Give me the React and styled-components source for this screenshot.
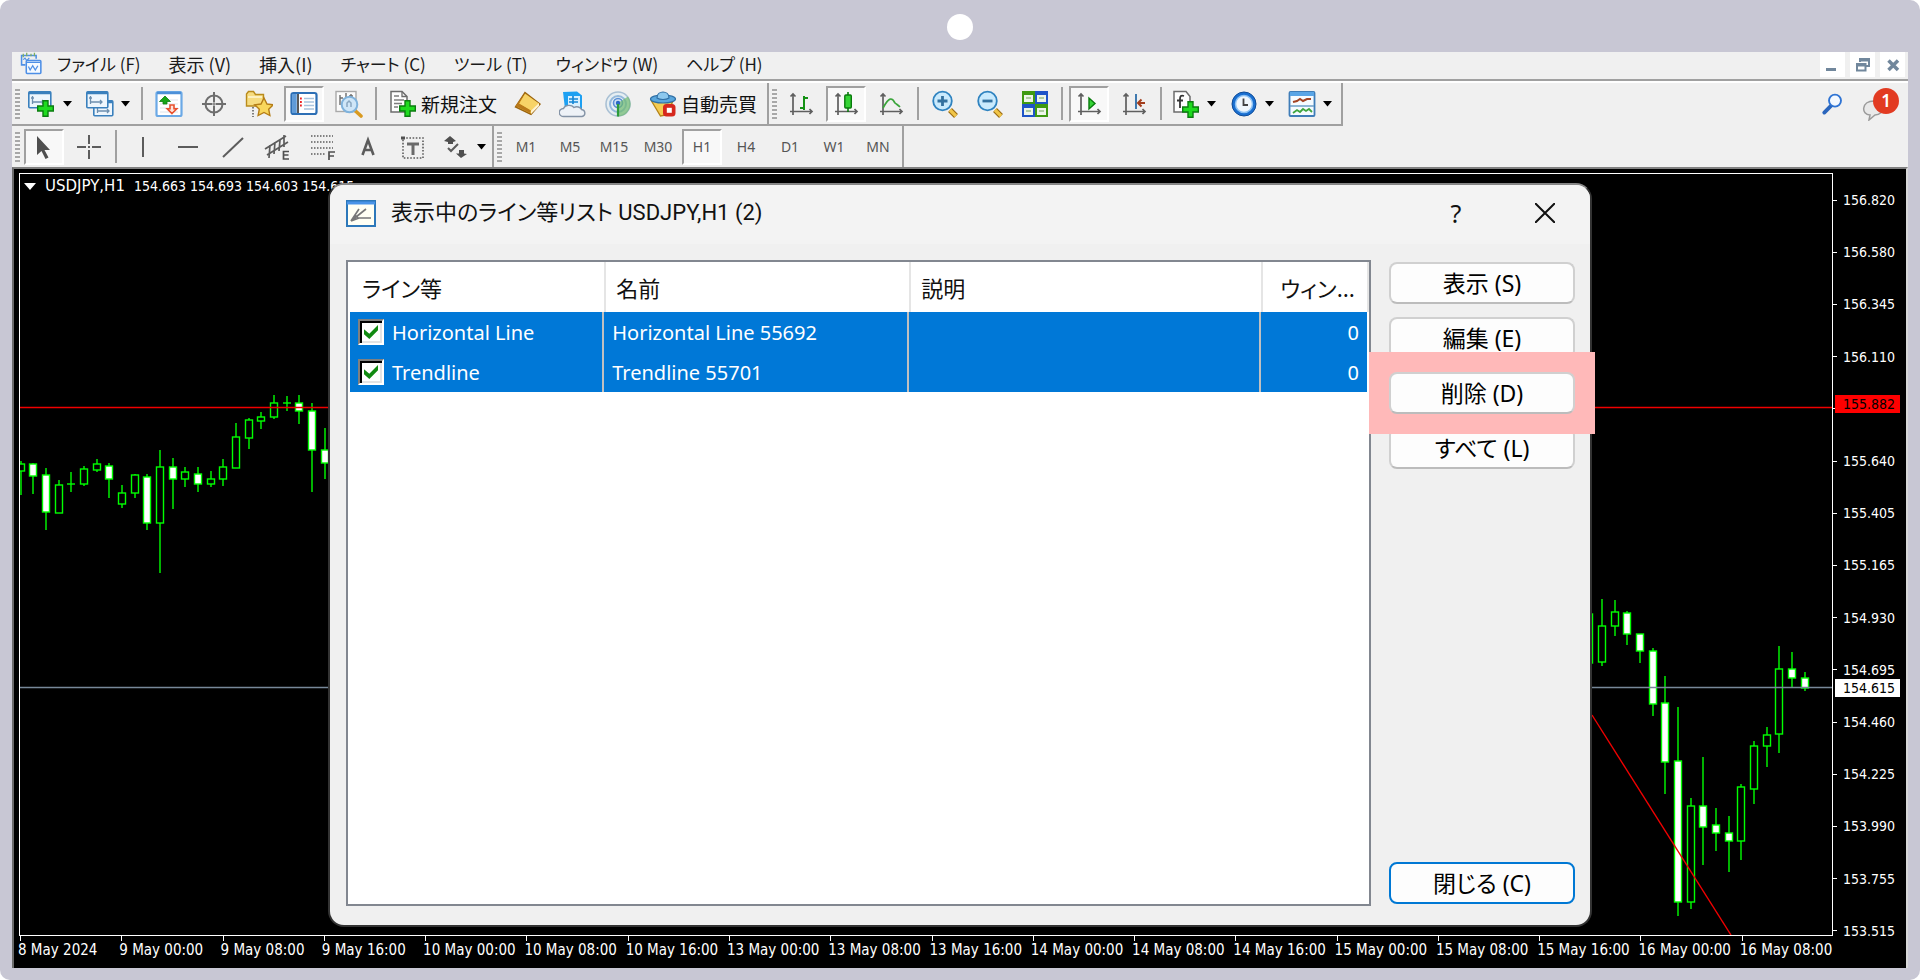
import React from "react";
import styled, { createGlobalStyle, css } from "styled-components";

const GlobalStyle = createGlobalStyle`
  * { box-sizing: border-box; }
  body { margin: 0; background: #fff; }
  button { font: inherit; color: inherit; border: 0; padding: 0; background: none; }
`;

const UI_FONT = `"Noto Sans", "Noto Sans CJK JP", sans-serif`;
const AXIS_FONT = `"DejaVu Sans Condensed", "Noto Sans", sans-serif`;

/* ---------- window frame ---------- */

const Frame = styled.div`
  min-height: 100vh;
  display: flex;
  flex-direction: column;
  padding: 0 12px 12px;
  border-radius: 10px;
  background: #c8c7d4;
  font-family: ${UI_FONT};
`;
const FrameTop = styled.div`
  height: 52px;
  display: flex;
  justify-content: center;
  padding-top: 14px;
`;
const Camera = styled.span`
  width: 26px;
  height: 26px;
  border-radius: 50%;
  background: #fff;
`;
const Terminal = styled.div`
  flex: 1;
  display: flex;
  flex-direction: column;
  background: #f0f0f0;
`;

/* ---------- menu ---------- */

const MenuBar = styled.header`
  height: 31px;
  display: flex;
  align-items: flex-start;
  padding: 0 3px 0 7px;
  border-bottom: 2px solid #fff;
  box-shadow: inset 0 -2px #a0a0a0;
`;
const MenuList = styled.nav`
  flex: 1;
  display: flex;
`;
const MenuItem = styled.button`
  height: 24px;
  padding: 0 14px;
  font-family: "Noto Sans CJK JP", sans-serif;
  font-feature-settings: "palt";
  font-size: ${(p) => (p.$kanji ? 18 : 17)}px;
  line-height: 24px;
  color: #1a1a1a;
  white-space: nowrap;
`;
const WindowButtons = styled.div`
  display: flex;
  gap: 5px;
`;
const WindowButton = styled.button`
  width: 25px;
  height: 25px;
  background: #fff;
  display: flex;
`;

/* ---------- toolbars ---------- */

const Toolbar = styled.div`
  height: ${(p) => (p.$last ? 41 : 43)}px;
  display: flex;
  justify-content: space-between;
`;
const Segments = styled.div`
  display: flex;
`;
const Segment = styled.div`
  display: flex;
  align-items: center;
  padding: 0 ${(p) => p.$end || 4}px 0 3px;
  border-right: 2px solid #a0a0a0;
  border-bottom: ${(p) => (p.$flat ? "0" : "2px solid #a0a0a0")};
`;
const Grip = styled.span`
  width: 5px;
  height: 30px;
  margin-right: 4px;
  background: repeating-linear-gradient(#a8a8a8 0 2px, #f4f4f4 2px 4px);
`;
const Group = styled.div`
  display: flex;
  gap: ${(p) => p.$gap || 5}px;
`;
const Divider = styled.span`
  width: 2px;
  height: 33px;
  margin: 0 6px;
  background: #a0a0a0;
`;
const ToolButton = styled.button`
  min-width: ${(p) => (p.$split ? 36 : 40)}px;
  height: 36px;
  display: flex;
  align-items: center;
  justify-content: center;
  gap: 4px;
  font-size: 14px;
  color: #555;
  border: 2px solid transparent;
  ${(p) =>
    p.$pressed &&
    css`
      background: #f8f8f8;
      border-color: #a0a0a0 #fff #fff #a0a0a0;
    `}
`;
const LabelButton = styled(ToolButton)`
  padding: 0 4px;
  font-family: "Noto Sans CJK JP", sans-serif;
  font-size: 19px;
  line-height: 24px;
  color: #111;
`;
const CaretButton = styled.button`
  width: 14px;
  height: 36px;
  display: flex;
  align-items: center;
  justify-content: center;
`;
const Split = styled.div`
  display: flex;
  margin-right: 3px;
`;
const Status = styled.div`
  display: flex;
  align-items: center;
  gap: 18px;
  padding: 0 8px 2px 0;
`;

/* ---------- chart ---------- */

const ChartWindow = styled.main`
  position: relative;
  flex: 1;
  display: grid;
  grid-template: 1fr 32px / 1fr 70px;
  padding: 4px 3px 0 5px;
  background: #000;
  border: solid;
  border-width: 2px 2px 0 2px;
  border-color: #808080 #d8d8d8 #000 #6c6c6c;
  color: #fff;
  font-family: ${AXIS_FONT};
  font-size: 14px;
`;
const Plot = styled.section`
  position: relative;
  border: 1px solid #fff;
  min-height: 600px;
`;
const PlotDrawing = styled.svg`
  position: absolute;
  inset: 0;
  width: 100%;
  height: 100%;
`;
const SymbolLine = styled.div`
  position: absolute;
  top: 4px;
  left: 4px;
  display: flex;
  align-items: center;
  gap: 9px;
  line-height: 17px;
  white-space: pre;
`;
const SymbolName = styled.span`
  font-family: "DejaVu Sans", sans-serif;
  font-size: 15px;
`;
const PriceAxis = styled.aside`
  position: relative;
  display: flex;
  flex-direction: column;
  justify-content: space-between;
  padding: 18px 0 0;
  margin-bottom: -4px;
`;
const PriceMark = styled.span`
  display: flex;
  align-items: center;
  gap: 6px;
  height: 18px;
  line-height: 18px;
  &::before {
    content: "";
    width: 4px;
    height: 1px;
    background: #fff;
  }
`;
const PriceTag = styled.span`
  position: absolute;
  left: 2px;
  top: ${(p) => p.$top}%;
  width: 65px;
  height: 18px;
  padding-left: 8px;
  line-height: 18px;
  color: #000;
  background: ${(p) => p.$color};
`;
const DateAxis = styled.footer`
  grid-column: 1 / 3;
  display: grid;
  grid-template-columns: repeat(18, 1fr);
  padding: 0 60px 0 1px;
  font-size: 15px;
`;
const DateMark = styled.span`
  position: relative;
  padding-top: 5px;
  line-height: 18px;
  white-space: nowrap;
  text-indent: -2px;
  &::before {
    content: "";
    position: absolute;
    left: 0;
    top: 0;
    width: 1px;
    height: 5px;
    background: #fff;
  }
`;

/* ---------- dialog ---------- */

const Dialog = styled.div`
  position: absolute;
  top: 14px;
  bottom: 41px;
  left: 314px;
  right: 314px;
  display: flex;
  flex-direction: column;
  background: #f0f0f0;
  border: 2px solid #333;
  border-top-color: #868686;
  border-radius: 16px;
  color: #111;
  font-family: ${UI_FONT};
  font-feature-settings: "palt";
`;
const DialogTitleBar = styled.div`
  height: 59px;
  display: flex;
  align-items: center;
  gap: 15px;
  padding: 0 35px 3px 16px;
  border-radius: 14px 14px 0 0;
  background: #f3f3f3;
`;
const DialogTitle = styled.h1`
  flex: 1;
  margin: 0;
  font-family: Roboto, "Noto Sans CJK JP", sans-serif;
  font-size: 22px;
  font-weight: 400;
  line-height: 32px;
`;
const TitleButton = styled.button`
  width: 20px;
  height: 32px;
  display: flex;
  align-items: center;
  justify-content: center;
  font-size: 25px;
  line-height: 32px;
  & + & { margin-left: 54px; }
`;
const DialogBody = styled.div`
  flex: 1;
  display: flex;
  gap: 18px;
  padding: 16px 15px 19px 16px;
`;
const ListBox = styled.div`
  flex: 1;
  padding: 0 2px;
  background: #fff;
  border: 2px solid #828790;
`;
const ObjectTable = styled.table`
  width: 100%;
  table-layout: fixed;
  border-collapse: separate;
  border-spacing: 0;
  font-size: 20px;
`;
const Column = styled.col`
  width: ${(p) => p.$width};
`;
const HeadCell = styled.th`
  height: 50px;
  padding: 0 12px;
  font-family: "Noto Sans CJK JP", sans-serif;
  font-size: 22px;
  font-weight: 400;
  text-align: ${(p) => (p.$right ? "right" : "left")};
  white-space: nowrap;
  box-shadow: 2px 0 #e5e5e5;
`;
const Cell = styled.td`
  height: 40px;
  padding: 0 8px;
  background: #0078d7;
  color: #fff;
  border-right: 2px solid #c0c0c0;
  text-align: ${(p) => (p.$right ? "right" : "left")};
  white-space: nowrap;
  &:last-child { border-right: 0; }
`;
const CheckLabel = styled.label`
  display: flex;
  align-items: center;
  gap: 8px;
`;
const CheckBox = styled.input`
  appearance: none;
  position: relative;
  width: 26px;
  height: 26px;
  margin: 0;
  background: #fff;
  border: 2px solid;
  border-color: #808080 #fff #fff #808080;
  box-shadow: inset 2px 2px #000, inset -2px -2px #e3e3e3;
  &:checked::before {
    content: "";
    position: absolute;
    inset: 4px;
    background: #108a10;
    clip-path: polygon(0 30%, 38% 62%, 100% 0, 100% 38%, 38% 100%, 0 66%);
  }
`;
const Actions = styled.div`
  width: 186px;
  display: flex;
  flex-direction: column;
  gap: 13px;
  padding: 2px 0;
`;
const ActionButton = styled.button`
  height: 42px;
  flex: none;
  font-family: ${UI_FONT};
  font-size: 23px;
  line-height: 36px;
  color: #000;
  background: #fdfdfd;
  border: 2px solid ${(p) => (p.$primary ? "#0078d4" : "#d0d0d0")};
  border-bottom-color: ${(p) => (p.$primary ? "#0078d4" : "#bcbcbc")};
  border-radius: 8px;
  ${(p) => p.$primary && "margin-top: auto;"}
`;
const Highlight = styled.div`
  position: relative;
  z-index: 1;
  display: flex;
  flex-direction: column;
  &::before {
    content: "";
    position: absolute;
    inset: -20px;
    background: #ffb9b9;
  }
  > * { position: relative; }
`;

/* ---------- icons ---------- */

const Svg = ({ children, size = 28, ...rest }) => (
  <svg width={size} height={size} viewBox="0 0 28 28" fill="none" aria-hidden="true" {...rest}>
    {children}
  </svg>
);
const Caret = () => (
  <svg width="9" height="6" viewBox="0 0 9 6" aria-hidden="true"><path d="M0 0h9L4.500 5.500z" fill="#000" /></svg>
);
const Plus = ({ x = 10, y = 10 }) => (
  <path transform={`translate(${x} ${y})`} d="M6 0.700h5v5.300h5.300v5H11v5.300H6V11H.7V6H6z" fill="#1fdb1f" stroke="#0b7d10" strokeWidth="1.400" />
);
const Axes = () => (
  <path d="M6 4v21M3 21.500h22M3.500 6.500L6 4l2.500 2.500M22.500 19l2.500 2.500-2.500 2.500" stroke="#5f5f5f" strokeWidth="1.700" />
);
const ChartPane = ({ x, y, w, h }) => (
  <g transform={`translate(${x} ${y})`}>
    <rect x=".8" y=".8" width={w} height={h} rx="1" fill="#eef6fd" stroke="#3a80bd" strokeWidth="1.600" />
    <path d={`M1 2h${w}`} stroke="#3a80bd" strokeWidth="2.500" />
    <path d="M4.500 5v8M3 7h3M4 11h12M14 9l2 2-2 2" stroke="#6d8fae" strokeWidth="1.300" />
  </g>
);

const icons = {
  app: (
    <>
      <path d="M7.500 15H3V4h17v4" stroke="#4d8fe6" strokeWidth="1.800" />
      <path d="M5 2v4M9 1v4M14 2v3M18 1v4" stroke="#7fae63" strokeWidth="1.500" />
      <path d="M5 9l2-2 2 3 3-3" stroke="#4d8fe6" strokeWidth="1.300" />
      <rect x="8.500" y="10" width="17" height="15" rx="1" fill="#f5faff" stroke="#4d8fe6" strokeWidth="1.800" />
      <path d="M9 12h16M11 17l2 4 3-5 3 5 3-5" stroke="#4d8fe6" strokeWidth="1.500" />
    </>
  ),
  newChart: (<><ChartPane x={0} y={1} w={22} h={16} /><Plus x={9} y={10} /></>),
  profiles: (<><ChartPane x={7} y={10} w={19} h={15} /><ChartPane x={0} y={1} w={21} h={16} /></>),
  market: (
    <>
      <rect x="1.500" y="2" width="25" height="24" rx="1.500" fill="#fff" stroke="#6ba9e6" strokeWidth="2.200" />
      <path d="M2 3h24" stroke="#4d90d8" strokeWidth="2.500" />
      <path d="M5 10h18M5 14h18M5 18h18M5 22h18" stroke="#dde3ea" />
      <path d="M10 6l5.500 5.500H12V14H8v-2.500H4.500z" fill="#16a616" stroke="#0d7d10" strokeWidth=".8" />
      <path d="M17 23.500l4.800-4.800h-2.800V15h-4v3.700h-2.800z" fill="#ffe3da" stroke="#e8512e" strokeWidth="1.600" />
    </>
  ),
  cross: (
    <>
      <circle cx="14" cy="14" r="8.500" stroke="#6e6e6e" strokeWidth="2" />
      <path d="M14 2v10M14 16v10M2 14h10M16 14h10" stroke="#6e6e6e" strokeWidth="2" />
      <path d="M14 12v4M12 14h4" stroke="#6e6e6e" />
    </>
  ),
  folder: (
    <>
      <path d="M1.500 16V4l2-2.500h5l2 3h8V16z" fill="#f6dc80" stroke="#b98b1c" strokeWidth="1.400" />
      <path d="M3 7h14" stroke="#fff6cf" strokeWidth="1.600" />
      <path d="M8 17v10" stroke="#555" strokeWidth="1.500" strokeDasharray="1.500 1.500" />
      <path d="M19 8l3 6 6.300.8-4.600 4.400 1.200 6.300L19 22.500l-5.900 3 1.200-6.300-4.600-4.400L16 14z" fill="#f9d75c" stroke="#b57d16" strokeWidth="1.400" />
    </>
  ),
  panel: (
    <>
      <rect x="1.500" y="3" width="25" height="21" rx="2" fill="#fff" stroke="#2d6fb5" strokeWidth="2.200" />
      <path d="M4.500 4v19" stroke="#5f9bd8" strokeWidth="4.500" />
      <path d="M8 4v19" stroke="#222" strokeWidth="1.500" />
      <path d="M14 8.500h10M14 12h10M14 15.500h10M14 19h10" stroke="#a9c4dd" strokeWidth="1.500" />
      <path d="M10 8.500h1.800M10 12h1.800M10 15.500h1.800" stroke="#e22" strokeWidth="1.800" />
    </>
  ),
  tester: (
    <>
      <rect x="1" y="1.500" width="20" height="20" fill="#fbfbfb" stroke="#a9a9a9" strokeWidth="1.400" />
      <path d="M5 5v10M5 8h3M11 3v7M16 4v8M14 6h4" stroke="#6c6c6c" strokeWidth="1.400" />
      <path d="M20.500 21l5.500 5" stroke="#d99a20" strokeWidth="3.600" strokeLinecap="round" />
      <circle cx="14.500" cy="14.500" r="7.800" fill="#cfe6f8" stroke="#7fb2dc" strokeWidth="2" />
      <path d="M12 17v-4l2-2 2 2v4" stroke="#8aa7c0" strokeWidth="1.500" />
    </>
  ),
  order: (
    <>
      <path d="M2 1.500h11l5 5V22H2z" fill="#fdfdfd" stroke="#6c6c6c" strokeWidth="1.500" />
      <path d="M13 1.500v5h5" stroke="#6c6c6c" strokeWidth="1.300" />
      <path d="M5 6h5M5 10h10M5 13.500h8M5 17h4" stroke="#7d7d7d" strokeWidth="1.500" />
      <Plus x={10} y={10} />
    </>
  ),
  book: (
    <>
      <path d="M11 2.500L26 14l-9 10.500L1.500 17z" fill="#f0bd3c" stroke="#9b6510" strokeWidth="1.400" />
      <path d="M11 3l-9.500 13L16 23l1-3-12-6.500z" fill="#b9791a" />
      <path d="M11 4l14 9.500-8 7L5.500 13.500z" fill="#f7d367" />
      <path d="M17 20.500l8-7.500v3l-8 8z" fill="#fff3d0" />
    </>
  ),
  cloud: (
    <>
      <path d="M4 2l14-.5 5 4V19H6z" fill="#1da0f2" />
      <path d="M9 6h12v11H9z" fill="#d8f0ff" />
      <path d="M10 9h9M14 6v8M10 12h9" stroke="#1687d6" strokeWidth="1.700" />
      <path d="M5 26.500a4.500 4 0 0 1-.5-8 6 5 0 0 1 10.500-1 5 4 0 0 1 7.500 2 4 3.600 0 0 1 .5 7z" fill="#eef2f7" stroke="#8493a6" strokeWidth="1.400" />
    </>
  ),
  signal: (
    <>
      <circle cx="14" cy="14" r="12" fill="#e6eef2" stroke="#a9c0d4" strokeWidth="1.600" />
      <circle cx="14" cy="14" r="8" stroke="#94b9dc" strokeWidth="2" />
      <circle cx="14" cy="13" r="4.500" fill="#cfe0f4" stroke="#5a8fd6" strokeWidth="1.600" />
      <path d="M14 13v13.500A12.500 12.500 0 0 0 24 6.500z" fill="#6fba6f" opacity=".7" />
      <circle cx="14" cy="13" r="2.200" fill="#2a69c4" />
      <path d="M14 14v12.500" stroke="#2c9b3a" strokeWidth="2.200" />
    </>
  ),
  auto: (
    <>
      <path d="M2.500 11l21 1-6 13-6 1z" fill="#f5cc53" stroke="#b58316" strokeWidth="1.300" />
      <ellipse cx="14" cy="9" rx="12.500" ry="4" fill="#5aa7dd" stroke="#2f6fa5" strokeWidth="1.200" />
      <path d="M8 8c0-8 12-8 12 0-3 2-9 2-12 0z" fill="#8cc8ee" stroke="#2f6fa5" strokeWidth="1.200" />
      <rect x="14" y="14" width="12.500" height="12.500" rx="3.500" fill="#d6281d" />
      <rect x="17.800" y="17.800" width="5" height="5" fill="#fff" />
    </>
  ),
  bars: (<><Axes /><path d="M17 6v14M17 8h4M13 18h4" stroke="#149114" strokeWidth="2" /></>),
  candles: (<><Axes /><path d="M16 2v20" stroke="#087a0c" strokeWidth="1.600" /><rect x="12.800" y="5" width="6.500" height="13" rx="1" fill="#35d435" stroke="#087a0c" strokeWidth="1.400" /></>),
  line: (<><Axes /><path d="M6 18c6-11 9-11 12-5 1 1 3 2 5 4" stroke="#3ba53b" strokeWidth="1.700" /></>),
  zoomIn: (
    <>
      <path d="M19 20l6 6" stroke="#9a6a12" strokeWidth="5.500" /><path d="M19 20l6 6" stroke="#f0c548" strokeWidth="3.200" />
      <circle cx="11.500" cy="11" r="9.300" fill="#c9eafd" stroke="#2f83c0" strokeWidth="1.800" />
      <path d="M11.500 6v10M6.500 11h10" stroke="#33719f" strokeWidth="2.800" />
    </>
  ),
  zoomOut: (
    <>
      <path d="M19 20l6 6" stroke="#9a6a12" strokeWidth="5.500" /><path d="M19 20l6 6" stroke="#f0c548" strokeWidth="3.200" />
      <circle cx="11.500" cy="11" r="9.300" fill="#c9eafd" stroke="#2f83c0" strokeWidth="1.800" />
      <path d="M6.500 11h10" stroke="#33719f" strokeWidth="2.800" />
    </>
  ),
  tile: (
    <>
      <path d="M1 1h13v13H1zM14 14h13v13H14z" fill="#3f9a12" />
      <path d="M14 1h13v13H14zM1 14h13v13H1z" fill="#1f55c8" />
      <path d="M3 5h9v7H3zM16 5h9v7h-9zM3 18h9v7H3zM16 18h9v7h-9z" fill="#eef6ea" />
      <path d="M5 8h5M18 8h5M5 21h5M18 21h5" stroke="#9bbf8a" strokeWidth="1.500" />
    </>
  ),
  autoscroll: (<><Axes /><path d="M14 8v11l6-5.500z" fill="#35d435" stroke="#087a0c" strokeWidth="1.400" /></>),
  shift: (<><Axes /><path d="M16 4v15" stroke="#2c6ca8" strokeWidth="1.800" /><path d="M25 13h-7M21.500 9.500L18 13l3.500 3.500" stroke="#a33d1c" strokeWidth="2" /></>),
  indicator: (
    <>
      <path d="M2 1.500h12l4 5V22H2z" fill="#fdfdfd" stroke="#6c6c6c" strokeWidth="1.500" />
      <path d="M12 6c-3-1-4 0-4 3v9M5 10.500h6" stroke="#333" strokeWidth="1.800" />
      <Plus x={10} y={11} />
    </>
  ),
  clock: (
    <>
      <circle cx="14" cy="14" r="12" fill="#1a6fd0" stroke="#0f4c98" />
      <circle cx="14" cy="14" r="8.500" fill="#f1f7fc" stroke="#8cc2f4" strokeWidth="1.500" />
      <path d="M13.500 8.500V15H18" stroke="#444" strokeWidth="1.800" />
    </>
  ),
  template: (
    <>
      <rect x="1.500" y="2" width="25" height="24" rx="1" fill="#f6fbff" stroke="#3f7db8" strokeWidth="1.800" />
      <path d="M2 4h24" stroke="#5aa5e6" strokeWidth="4" /><path d="M2 16h24" stroke="#6d9fc8" strokeWidth="1.500" />
      <path d="M5 12l4-1 3-2 3 2 4-2h4" stroke="#a34425" strokeWidth="2" />
      <path d="M5 23l4-3 3 2 3-3 3 2 3-2 3 3" stroke="#3fa53f" strokeWidth="1.800" />
    </>
  ),
  cursor: (<path d="M7 3v19l4.500-4 4 8 3-1.500-4-7.500H20z" fill="#4f4f4f" />),
  crosshair: (<path d="M14 2v9M14 17v9M2 14h9M17 14h9M13 14h2" stroke="#5c5c5c" strokeWidth="2" />),
  vline: (<path d="M14 4v20" stroke="#5c5c5c" strokeWidth="2" />),
  hline: (<path d="M4 14h20" stroke="#5c5c5c" strokeWidth="2" />),
  trend: (<path d="M4 24L24 5" stroke="#5c5c5c" strokeWidth="2" />),
  channel: (
    <>
      <path d="M1 16L22 3M3 22L24 9M6 12l-1 13M11 9l-1 12M16 7l-1 11M20 2v12" stroke="#5c5c5c" strokeWidth="1.700" />
      <path d="M25 18.500h-5.500v7.500H25M19.500 22h5" stroke="#4f4f4f" strokeWidth="1.700" />
    </>
  ),
  fibo: (
    <>
      <path d="M2 3h22M2 9h22M2 15h22M2 21h15" stroke="#5c5c5c" strokeWidth="1.600" strokeDasharray="1.500 1.500" />
      <path d="M20 27v-8h6M20 23h5" stroke="#4f4f4f" strokeWidth="1.700" />
    </>
  ),
  text: (<path d="M8.500 22L14 7l5.500 15M10.500 17h7" stroke="#5c5c5c" strokeWidth="2.600" />),
  label: (
    <>
      <rect x="4" y="5" width="20" height="20" stroke="#5c5c5c" strokeWidth="1.600" strokeDasharray="1.600 1.600" />
      <path d="M2 3.500h4v3H2z" fill="#4f4f4f" /><path d="M8 11h12M14 11v11" stroke="#6a6a6a" strokeWidth="3" />
    </>
  ),
  arrows: (
    <>
      <path d="M8 3l6 5-3 1v2H6V9L2 8z" fill="#4f4f4f" /><path d="M19 25l-5-4.500h3V17h5v3.500l3 .5z" fill="#4f4f4f" />
      <path d="M6 15l3 3 7-7" stroke="#5c5c5c" strokeWidth="2" />
    </>
  ),
  search: (
    <>
      <path d="M13 16l-8 8" stroke="#2b66bd" strokeWidth="4.500" strokeLinecap="round" />
      <circle cx="17.500" cy="10" r="7" fill="#f4f9ff" stroke="#2f74d4" strokeWidth="2.200" />
    </>
  ),
};

const Icon = ({ name, size }) => <Svg size={size}>{icons[name]}</Svg>;

const Tool = ({ name, label, pressed }) => (
  <ToolButton aria-label={label} $pressed={pressed}><Icon name={name} /></ToolButton>
);
const SplitTool = ({ name, label }) => (
  <Split>
    <ToolButton $split aria-label={label}><Icon name={name} /></ToolButton>
    <CaretButton aria-label={`${label} メニュー`}><Caret /></CaretButton>
  </Split>
);

/* ---------- data ---------- */

const menus = [
  { text: "ファイル (F)" },
  { text: "表示 (V)", kanji: true },
  { text: "挿入(I)", kanji: true },
  { text: "チャート (C)" },
  { text: "ツール (T)" },
  { text: "ウィンドウ (W)" },
  { text: "ヘルプ (H)" },
];
const periods = ["M1", "M5", "M15", "M30", "H1", "H4", "D1", "W1", "MN"];
const prices = ["156.820", "156.580", "156.345", "156.110", "", "155.640", "155.405", "155.165", "154.930", "154.695", "154.460", "154.225", "153.990", "153.755", "153.515"];
const dates = [
  "8 May 2024", "9 May 00:00", "9 May 08:00", "9 May 16:00", "10 May 00:00", "10 May 08:00",
  "10 May 16:00", "13 May 00:00", "13 May 08:00", "13 May 16:00", "14 May 00:00", "14 May 08:00",
  "14 May 16:00", "15 May 00:00", "15 May 08:00", "15 May 16:00", "16 May 00:00", "16 May 08:00",
];

// [x, high, body top, body bottom, low, falling]
const candles = [
  [1, 287, 290, 297, 321, 0], [13, 289, 290, 302, 320, 1], [26, 294, 301, 338, 356, 1],
  [39, 306, 311, 339, 339, 0], [51, 298, 310, 310, 318, 0], [64, 292, 295, 310, 312, 0],
  [77, 285, 290, 296, 298, 0], [89, 289, 292, 305, 324, 1], [102, 311, 319, 330, 334, 0],
  [115, 300, 301, 319, 324, 0], [127, 300, 303, 349, 356, 1], [140, 276, 293, 349, 399, 0],
  [153, 284, 293, 305, 335, 1], [165, 293, 298, 305, 313, 0], [178, 293, 300, 310, 318, 1],
  [191, 297, 305, 310, 313, 0], [203, 285, 293, 305, 312, 0], [216, 249, 263, 294, 294, 0],
  [229, 244, 246, 264, 275, 0], [241, 238, 243, 247, 255, 0], [254, 221, 229, 243, 245, 0],
  [267, 222, 229, 229, 237, 0], [279, 221, 229, 237, 250, 1], [292, 229, 237, 276, 318, 1],
  [305, 254, 276, 289, 305, 1],
  [1569, 435, 440, 489, 489, 0], [1582, 425, 452, 488, 492, 0], [1595, 426, 438, 452, 462, 0],
  [1607, 437, 439, 460, 471, 1], [1620, 460, 460, 477, 489, 1], [1633, 474, 477, 530, 542, 1],
  [1645, 502, 529, 588, 620, 1], [1658, 533, 587, 728, 742, 1], [1671, 624, 632, 728, 735, 0],
  [1683, 583, 632, 653, 691, 1], [1696, 634, 651, 659, 677, 1], [1709, 642, 659, 667, 698, 1],
  [1721, 610, 613, 667, 686, 0], [1734, 567, 572, 615, 630, 0], [1747, 553, 561, 572, 593, 0],
  [1759, 472, 495, 560, 579, 0], [1772, 478, 495, 504, 513, 1], [1785, 498, 504, 514, 517, 1],
];
const rows = [
  ["Horizontal Line", "Horizontal Line 55692", "", "0"],
  ["Trendline", "Trendline 55701", "", "0"],
];

const Candle = ({ d: [x, high, top, bottom, low, falling] }) => (
  <g stroke="#00ff00" strokeWidth="1.400">
    <path d={`M${x} ${high}V${low}`} />
    {top === bottom ? (
      <path d={`M${x - 4} ${top}h8`} />
    ) : (
      <rect x={x - 3.5} y={top} width="7" height={bottom - top} fill={falling ? "#fff" : "#000"} />
    )}
  </g>
);

const ObjectDialog = () => (
  <Dialog role="dialog" aria-labelledby="objects-title">
    <DialogTitleBar>
      <svg width="30" height="27" viewBox="0 0 30 27" fill="none" aria-hidden="true">
        <rect x="1" y="1" width="28" height="25" fill="#fffff4" stroke="#2d78ba" strokeWidth="2" />
        <path d="M1 3h28" stroke="#4a94e8" strokeWidth="3" />
        <path d="M5 21L13 9M5 21l15-12M5 21l8-3h12M9 15l3 3" stroke="#777" strokeWidth="1.700" />
      </svg>
      <DialogTitle id="objects-title">表示中のライン等リスト USDJPY,H1 (2)</DialogTitle>
      <TitleButton aria-label="ヘルプ">?</TitleButton>
      <TitleButton aria-label="閉じる">
        <svg width="20" height="20" viewBox="0 0 20 20" aria-hidden="true"><path d="M0 0l20 20M20 0L0 20" stroke="#111" strokeWidth="2" /></svg>
      </TitleButton>
    </DialogTitleBar>
    <DialogBody>
      <ListBox>
        <ObjectTable>
          <colgroup>
            <Column $width="25%" />
            <Column $width="30%" />
            <Column $width="auto" />
            <Column $width="106px" />
          </colgroup>
          <thead>
            <tr>
              <HeadCell>ライン等</HeadCell>
              <HeadCell>名前</HeadCell>
              <HeadCell>説明</HeadCell>
              <HeadCell $right>ウィン...</HeadCell>
            </tr>
          </thead>
          <tbody>
            {rows.map(([kind, name, note, win]) => (
              <tr key={name}>
                <Cell>
                  <CheckLabel><CheckBox type="checkbox" defaultChecked />{kind}</CheckLabel>
                </Cell>
                <Cell>{name}</Cell>
                <Cell>{note}</Cell>
                <Cell $right>{win}</Cell>
              </tr>
            ))}
          </tbody>
        </ObjectTable>
      </ListBox>
      <Actions>
        <ActionButton>表示 (S)</ActionButton>
        <ActionButton>編集 (E)</ActionButton>
        <Highlight><ActionButton>削除 (D)</ActionButton></Highlight>
        <ActionButton>すべて (L)</ActionButton>
        <ActionButton $primary>閉じる (C)</ActionButton>
      </Actions>
    </DialogBody>
  </Dialog>
);

export default function App() {
  return (
    <>
      <GlobalStyle />
      <Frame>
        <FrameTop><Camera /></FrameTop>
        <Terminal>
          <MenuBar>
            <Icon name="app" size={24} />
            <MenuList>{menus.map((m) => <MenuItem key={m.text} $kanji={m.kanji}>{m.text}</MenuItem>)}</MenuList>
            <WindowButtons>
              <WindowButton aria-label="最小化">
                <svg width="25" height="25"><path d="M6 17.500h10" stroke="#71879c" strokeWidth="3" /></svg>
              </WindowButton>
              <WindowButton aria-label="元に戻す">
                <svg width="25" height="25" fill="none" stroke="#71879c"><path d="M10 10V7h9v7h-3" strokeWidth="2" /><path d="M10 8h9M7 13h9" strokeWidth="3" /><path d="M7 12h8.500v6.500H7z" strokeWidth="2" /></svg>
              </WindowButton>
              <WindowButton aria-label="閉じる">
                <svg width="25" height="25"><path d="M8.500 8.500l9.500 9.500M18 8.500L8.500 18" stroke="#71879c" strokeWidth="3.500" /></svg>
              </WindowButton>
            </WindowButtons>
          </MenuBar>

          <Toolbar>
            <Segments>
              <Segment>
                <Grip />
                <Group>
                  <SplitTool name="newChart" label="新規チャート" />
                  <SplitTool name="profiles" label="チャートの組表示" />
                </Group>
                <Divider />
                <Group>
                  <Tool name="market" label="気配値表示" />
                  <Tool name="cross" label="データウィンドウ" />
                  <Tool name="folder" label="ナビゲーター" />
                  <Tool name="panel" label="ターミナル" pressed />
                  <Tool name="tester" label="ストラテジーテスター" />
                </Group>
                <Divider />
                <Group>
                  <LabelButton><Icon name="order" />新規注文</LabelButton>
                  <Tool name="book" label="メタエディター" />
                  <Tool name="cloud" label="クラウド" />
                  <Tool name="signal" label="シグナル" />
                  <LabelButton><Icon name="auto" />自動売買</LabelButton>
                </Group>
              </Segment>
              <Segment>
                <Grip />
                <Group>
                  <Tool name="bars" label="バーチャート" />
                  <Tool name="candles" label="ローソク足" pressed />
                  <Tool name="line" label="ラインチャート" />
                </Group>
                <Divider />
                <Group>
                  <Tool name="zoomIn" label="ズームイン" />
                  <Tool name="zoomOut" label="ズームアウト" />
                  <Tool name="tile" label="整列" />
                </Group>
                <Divider />
                <Group>
                  <Tool name="autoscroll" label="自動スクロール" pressed />
                  <Tool name="shift" label="チャートシフト" />
                </Group>
                <Divider />
                <Group>
                  <SplitTool name="indicator" label="インディケータ" />
                  <SplitTool name="clock" label="時間足" />
                  <SplitTool name="template" label="テンプレート" />
                </Group>
              </Segment>
            </Segments>
            <Status>
              <Icon name="search" size={24} />
              <svg width="38" height="34" viewBox="0 0 38 34" aria-hidden="true">
                <path d="M12 14c-13 0-13 14-4 14l-1 5 6-5c10 0 12-14-1-14z" fill="#e9e9e9" stroke="#9b9b9b" strokeWidth="1.500" />
                <circle cx="24" cy="14" r="13" fill="#e23b22" />
                <text x="24" y="20" textAnchor="middle" fontFamily="Noto Sans, sans-serif" fontSize="17" fontWeight="600" fill="#fff">1</text>
              </svg>
            </Status>
          </Toolbar>

          <Toolbar $last>
            <Segments>
              <Segment $flat $end={1}>
                <Grip />
                <Group>
                  <Tool name="cursor" label="カーソル" pressed />
                  <Tool name="crosshair" label="クロスヘア" />
                </Group>
                <Divider />
                <Group>
                  <Tool name="vline" label="垂直線" />
                  <Tool name="hline" label="水平線" />
                  <Tool name="trend" label="トレンドライン" />
                  <Tool name="channel" label="チャネル" />
                  <Tool name="fibo" label="フィボナッチ" />
                  <Tool name="text" label="テキスト" />
                  <Tool name="label" label="テキストラベル" />
                  <SplitTool name="arrows" label="矢印" />
                </Group>
              </Segment>
              <Segment $flat>
                <Grip />
                <Group $gap={4}>
                  {periods.map((p) => <ToolButton key={p} $pressed={p === "H1"}>{p}</ToolButton>)}
                </Group>
              </Segment>
            </Segments>
          </Toolbar>

          <ChartWindow>
            <Plot>
              <PlotDrawing viewBox="0 0 1812 761" preserveAspectRatio="none" fill="none">
                {candles.map((d) => <Candle key={d[0]} d={d} />)}
                <path d="M0 233.500H1812" stroke="#f00000" strokeWidth="1.400" />
                <path d="M0 513.500H1812" stroke="#778899" strokeWidth="1.400" />
                <path d="M1572 541L1711 761" stroke="#f00000" strokeWidth="1.400" />
              </PlotDrawing>
              <SymbolLine>
                <svg width="12" height="7" viewBox="0 0 12 7" aria-hidden="true"><path d="M0 0h12L6 7z" fill="#fff" /></svg>
                <SymbolName>USDJPY,H1</SymbolName>
                <span>154.663 154.693 154.603 154.615</span>
              </SymbolLine>
            </Plot>
            <PriceAxis>
              {prices.map((p, i) => <PriceMark key={i}>{p}</PriceMark>)}
              <PriceTag $top={29} $color="#ff0000">155.882</PriceTag>
              <PriceTag $top={66} $color="#ffffff">154.615</PriceTag>
            </PriceAxis>
            <DateAxis>{dates.map((d) => <DateMark key={d}>{d}</DateMark>)}</DateAxis>
            <ObjectDialog />
          </ChartWindow>
        </Terminal>
      </Frame>
    </>
  );
}
